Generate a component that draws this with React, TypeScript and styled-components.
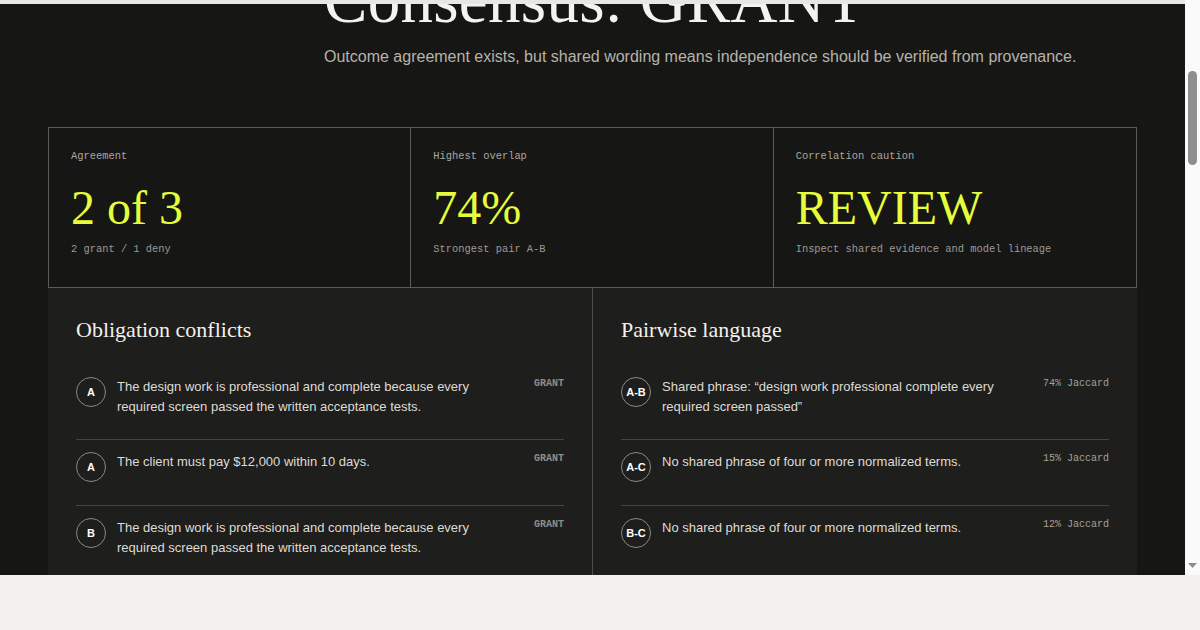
import React, { useLayoutEffect, useRef } from "react";
import styled, { createGlobalStyle } from "styled-components";

const GlobalStyle = createGlobalStyle`
  html, body {
    margin: 0;
    padding: 0;
    background: #f2f1ed;
  }
  body {
    font-family: "Liberation Sans", Arial, sans-serif;
  }
  *, *::before, *::after {
    box-sizing: border-box;
  }
`;

const SERIF = `"Liberation Serif", "Times New Roman", serif`;
const MONO = `"Liberation Mono", "Courier New", monospace`;
const SANS = `"Liberation Sans", Arial, sans-serif`;
const ACCENT = "#e6fd3b";

/* Report frame: scrolling document on the left, its scrollbar on the right */
const Frame = styled.div`
  display: flex;
  height: 575px;
`;

const ScrollArea = styled.div`
  position: relative;
  flex: 1;
  min-width: 0;
  overflow: hidden;
  background: #161614;
`;

const ScrollTrack = styled.div`
  width: 15px;
  flex: none;
  display: flex;
  flex-direction: column;
  align-items: center;
  background: #fafafa;
`;

const ScrollThumb = styled.div`
  margin-top: 71px;
  width: 9px;
  height: 94px;
  border-radius: 5px;
  background: #8e8e8e;
`;

const TrackSpacer = styled.div`
  flex: 1;
`;

const ArrowDown = styled.svg`
  display: block;
  margin-bottom: 7px;
`;

const ProgressRail = styled.div`
  position: sticky;
  top: 0;
  z-index: 5;
  height: 4px;
  background: #e8e7e3;
`;

const Page = styled.div`
  padding-bottom: 480px;
`;

const Nav = styled.nav`
  height: 76px;
  padding: 0 48px;
  display: flex;
  align-items: center;
  justify-content: space-between;
`;

const Brand = styled.span`
  font-family: ${MONO};
  font-size: 12px;
  letter-spacing: 0.08em;
  text-transform: uppercase;
  color: #f2f0ea;
`;

const NavLinks = styled.div`
  display: flex;
  gap: 24px;
  font-family: ${MONO};
  font-size: 11px;
  color: #9c9a94;
`;

const Hero = styled.header`
  display: grid;
  grid-template-columns: 228px 1fr;
  column-gap: 48px;
  padding: 230px 48px 58px;
`;

const Eyebrow = styled.span`
  font-family: ${MONO};
  font-size: 10.4px;
  line-height: 16px;
  letter-spacing: 0.06em;
  text-transform: uppercase;
  color: #a8a59e;
`;

const HeroCopy = styled.div`
  display: flex;
  flex-direction: column;
`;

const Headline = styled.h1`
  margin: 0;
  font-family: ${SERIF};
  font-weight: 400;
  font-size: 65px;
  line-height: 1;
  letter-spacing: 0.3px;
  color: #f5f3ee;
`;

const Lede = styled.p`
  margin: 12px 0 0;
  font-family: ${SANS};
  font-size: 16px;
  line-height: 24px;
  color: #b7b3aa;
`;

const StatGrid = styled.section`
  margin: 0 48px;
  display: grid;
  grid-template-columns: repeat(3, 1fr);
  border: 1px solid #5a5a56;
`;

const StatCell = styled.div`
  padding: 20px 22px 30px;
  display: flex;
  flex-direction: column;
  border-right: 1px solid #5a5a56;

  &:last-child {
    border-right: none;
  }
`;

const StatLabel = styled.span`
  font-family: ${MONO};
  font-size: 10.4px;
  line-height: 16px;
  color: #aaa7a0;
`;

const StatValue = styled.span`
  margin-top: 20px;
  font-family: ${SERIF};
  font-size: 48px;
  line-height: 48px;
  color: ${ACCENT};
`;

const StatNote = styled.span`
  margin-top: 9px;
  font-family: ${MONO};
  font-size: 10.4px;
  line-height: 16px;
  color: #9d9b95;
`;

const PanelGrid = styled.section`
  margin: 0 48px;
  display: grid;
  grid-template-columns: 544px 1fr;
  background: #1e1e1c;
`;

const Panel = styled.div`
  padding: 28px;

  & + & {
    border-left: 1px solid #4c4c49;
  }
`;

const PanelTitle = styled.h2`
  margin: 0 0 21px;
  font-family: ${SERIF};
  font-weight: 400;
  font-size: 22px;
  line-height: 28px;
  color: #f3f1eb;
`;

const RowList = styled.ul`
  margin: 0;
  padding: 0;
  list-style: none;
`;

const Row = styled.li`
  display: grid;
  grid-template-columns: 30px 1fr auto;
  column-gap: 11px;
  align-items: start;
  padding: 12px 0 23px;

  & + & {
    border-top: 1px solid #444441;
  }
`;

const Badge = styled.span`
  width: 30px;
  height: 30px;
  border: 1px solid #8a8985;
  border-radius: 50%;
  display: flex;
  align-items: center;
  justify-content: center;
  font-family: ${SANS};
  font-weight: 700;
  font-size: 11px;
  color: #ffffff;
`;

const RowText = styled.p`
  margin: 0;
  padding-right: 16px;
  font-family: ${SANS};
  font-size: 13px;
  line-height: 19.5px;
  color: #dedbd4;
`;

const Tag = styled.span<{ $strong?: boolean }>`
  font-family: ${MONO};
  font-size: 10px;
  line-height: 14px;
  font-weight: ${(p) => (p.$strong ? 700 : 400)};
  color: ${(p) => (p.$strong ? "#8f8d88" : "#a3a19b")};
  white-space: nowrap;
`;

const stats = [
  { label: "Agreement", value: "2 of 3", note: "2 grant / 1 deny" },
  { label: "Highest overlap", value: "74%", note: "Strongest pair A-B" },
  {
    label: "Correlation caution",
    value: "REVIEW",
    note: "Inspect shared evidence and model lineage",
  },
];

const obligations = [
  {
    who: "A",
    text: "The design work is professional and complete because every required screen passed the written acceptance tests.",
    tag: "GRANT",
  },
  { who: "A", text: "The client must pay $12,000 within 10 days.", tag: "GRANT" },
  {
    who: "B",
    text: "The design work is professional and complete because every required screen passed the written acceptance tests.",
    tag: "GRANT",
  },
  { who: "C", text: "The acceptance tests were never signed by the client.", tag: "DENY" },
];

const pairs = [
  {
    who: "A-B",
    text: "Shared phrase: \u201cdesign work professional complete every required screen passed\u201d",
    tag: "74% Jaccard",
  },
  { who: "A-C", text: "No shared phrase of four or more normalized terms.", tag: "15% Jaccard" },
  { who: "B-C", text: "No shared phrase of four or more normalized terms.", tag: "12% Jaccard" },
];

export default function App() {
  const scrollRef = useRef<HTMLDivElement>(null);
  const headlineRef = useRef<HTMLHeadingElement>(null);

  useLayoutEffect(() => {
    const area = scrollRef.current;
    const headline = headlineRef.current;
    if (area && headline) {
      area.scrollTop = headline.offsetTop + 32;
    }
  }, []);

  return (
    <>
      <GlobalStyle />
      <Frame>
        <ScrollArea ref={scrollRef}>
          <ProgressRail />
          <Page>
            <Nav>
              <Brand>Consensus Ledger</Brand>
              <NavLinks>
                <span>Claims</span>
                <span>Evidence</span>
                <span>Lineage</span>
              </NavLinks>
            </Nav>

            <Hero>
              <Eyebrow>Verdict</Eyebrow>
              <HeroCopy>
                <Headline ref={headlineRef}>Consensus: GRANT</Headline>
                <Lede>
                  Outcome agreement exists, but shared wording means independence should be
                  verified from provenance.
                </Lede>
              </HeroCopy>
            </Hero>

            <StatGrid>
              {stats.map((s) => (
                <StatCell key={s.label}>
                  <StatLabel>{s.label}</StatLabel>
                  <StatValue>{s.value}</StatValue>
                  <StatNote>{s.note}</StatNote>
                </StatCell>
              ))}
            </StatGrid>

            <PanelGrid>
              <Panel>
                <PanelTitle>Obligation conflicts</PanelTitle>
                <RowList>
                  {obligations.map((o, i) => (
                    <Row key={i}>
                      <Badge>{o.who}</Badge>
                      <RowText>{o.text}</RowText>
                      <Tag $strong>{o.tag}</Tag>
                    </Row>
                  ))}
                </RowList>
              </Panel>
              <Panel>
                <PanelTitle>Pairwise language</PanelTitle>
                <RowList>
                  {pairs.map((p) => (
                    <Row key={p.who}>
                      <Badge>{p.who}</Badge>
                      <RowText>{p.text}</RowText>
                      <Tag>{p.tag}</Tag>
                    </Row>
                  ))}
                </RowList>
              </Panel>
            </PanelGrid>
          </Page>
        </ScrollArea>
        <ScrollTrack>
          <ScrollThumb />
          <TrackSpacer />
          <ArrowDown width="9" height="5" viewBox="0 0 9 5">
            <polygon points="0,0 9,0 4.5,5" fill="#8e8e8e" />
          </ArrowDown>
        </ScrollTrack>
      </Frame>
    </>
  );
}
